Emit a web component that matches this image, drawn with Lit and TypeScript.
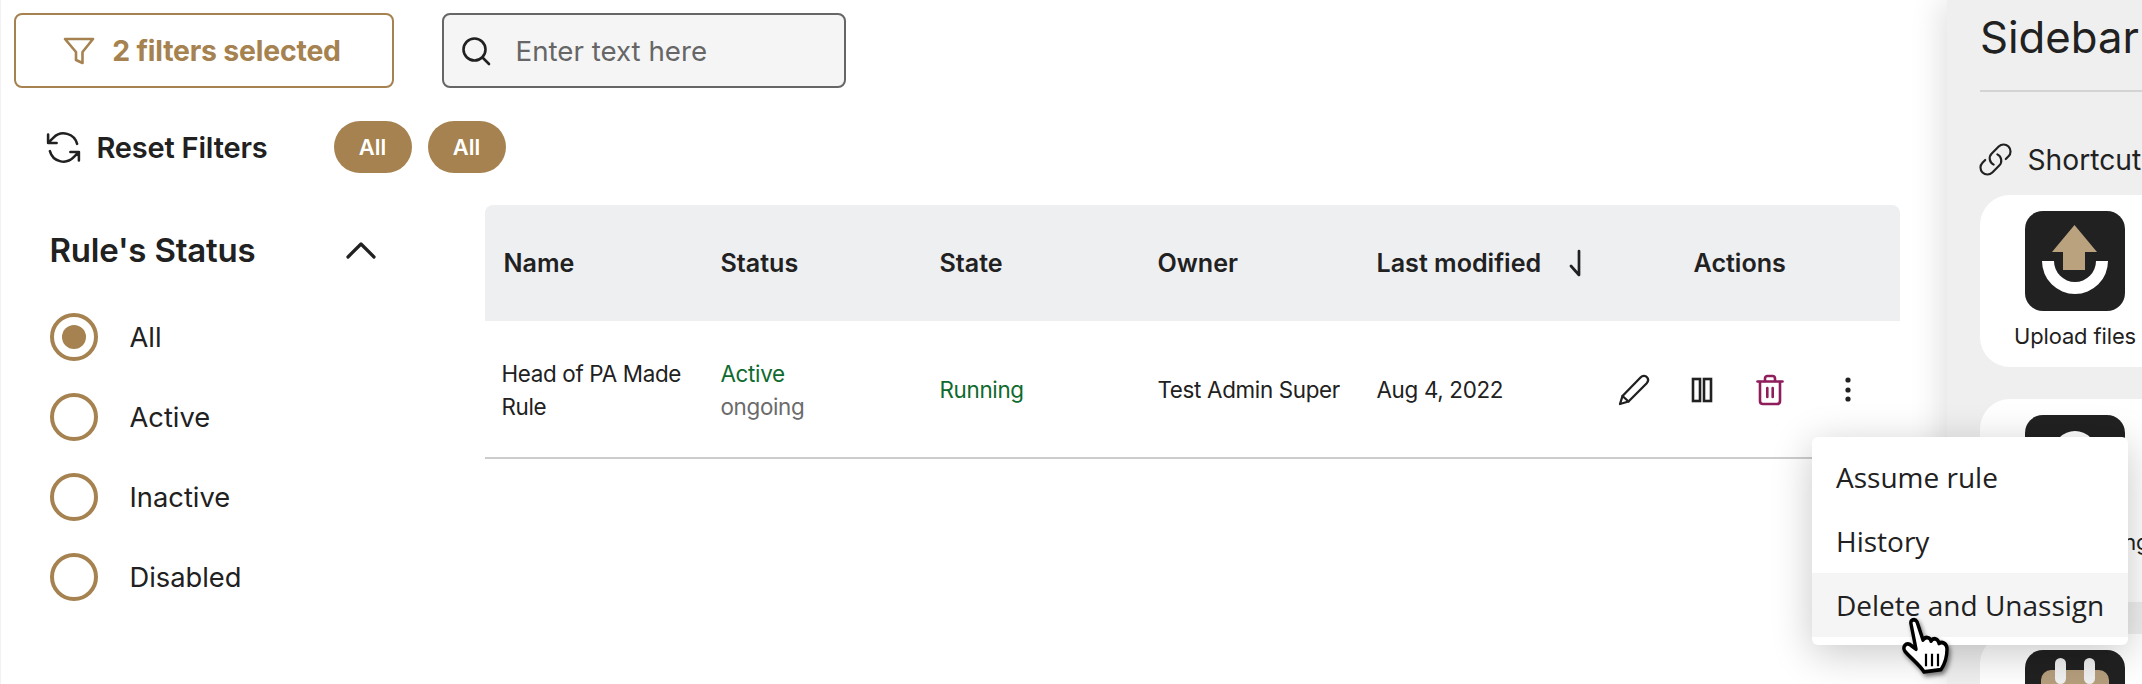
import { LitElement, html, css, svg } from "lit";
import { customElement } from "lit/decorators.js";

const radios = ["All", "Active", "Inactive", "Disabled"];

@customElement("app-root")
export class AppRoot extends LitElement {
  static styles = css`
    :host {
      display: block;
      width: 2142px;
      height: 684px;
      overflow: hidden;
      position: relative;
      background: #fff;
      font-family: Inter, "Liberation Sans", sans-serif;
      color: #212121;
    }
    .page { display: flex; height: 684px; }
    .main { width: 1947px; flex: none; display: flex; flex-direction: column; border-left: 1.5px solid #f2f2f2; box-sizing: border-box; }
    .toolbar { display: flex; gap: 48px; padding: 13px 0 0 12.5px; }
    .filter-btn {
      width: 380px; height: 75px; box-sizing: border-box;
      border: 2px solid #a5824f; border-radius: 8px; background: #fff;
      display: flex; align-items: center; justify-content: center; gap: 17px;
      color: #a5824f; font-size: 28.4px; font-weight: 700; letter-spacing: -0.2px;
      padding-right: 3px;
    }
    .search {
      width: 404px; height: 75px; box-sizing: border-box;
      border: 2px solid #666; border-radius: 8px; background: #f5f5f5;
      display: flex; align-items: center; padding-left: 17px; gap: 25px;
      color: #666; font-size: 27.7px;
    }
    .reset-row { display: flex; align-items: center; margin-top: 33px; height: 52px; padding-left: 42px; }
    .reset { display: flex; align-items: center; gap: 12.5px; font-size: 29px; font-weight: 600; width: 290.5px; letter-spacing: -0.2px; }
    .pills { display: flex; gap: 16px; }
    .pill {
      width: 78px; height: 52px; border-radius: 26px; background: #a5824f; color: #fff;
      display: flex; align-items: center; justify-content: center;
      font-size: 21.9px; font-weight: 600;
    }
    .content { display: flex; margin-top: 32px; }
    .aside { width: 483.5px; flex: none; box-sizing: border-box; padding: 27px 0 0 48.5px; }
    .aside-head { width: 326px; height: 36px; display: flex; align-items: center; justify-content: space-between; font-size: 33px; font-weight: 600; letter-spacing: -0.2px; }
    .radios { margin-top: 29px; }
    .radio-row { height: 80px; display: flex; align-items: center; gap: 32px; font-size: 27.3px; }
    .radio {
      width: 48px; height: 48px; box-sizing: border-box; border-radius: 50%;
      border: 4px solid #a5824f; display: flex; align-items: center; justify-content: center; flex: none;
    }
    .radio.on::after { content: ""; width: 24px; height: 24px; border-radius: 50%; background: #a5824f; }
    .table { width: 1415px; flex: none; }
    .thead, .trow { display: grid; grid-template-columns: 217px 219px 218px 219px 252px 290px; }
    .thead {
      height: 116px; background: #eeeff1; border-radius: 8px 8px 0 0;
      align-items: center; font-size: 25.1px; font-weight: 600; white-space: nowrap;
    }
    .th { padding-left: 19px; }
    .th.sort { display: flex; align-items: center; gap: 27px; }
    .th.act { padding-left: 84px; }
    .trow {
      height: 137.5px; box-sizing: border-box; border-bottom: 2px solid #ccc;
      align-items: center; font-size: 22.4px; letter-spacing: -0.33px; line-height: 33px; padding-top: 2px;
    }
    .td { padding-left: 19px; }
    .td.name { padding-left: 17px; padding-right: 8px; }
    .green { color: #0f6a2e; }
    .gray { color: #6b6b6b; }
    .actions { display: flex; align-items: center; gap: 36px; padding-left: 8px; }
    .actions svg { display: block; flex: none; }
    .actions .dots { margin-left: 10px; }
    .sidebar {
      width: 195px; flex: none; background: #efefef; box-sizing: border-box;
      padding: 11px 0 0 33px; box-shadow: -6px 0 30px rgba(0, 0, 0, 0.12); position: relative;
      overflow: hidden;
    }
    .sidebar-title { font-size: 43.7px; line-height: 54px; color: #212121; }
    .rule { height: 1.5px; background: #d4d4d4; margin-top: 25px; width: 200px; }
    .shortcuts { display: flex; align-items: center; gap: 13.5px; margin-top: 48px; height: 40px; font-size: 28.2px; white-space: nowrap; margin-left: -3px; }
    .shortcuts svg { flex: none; }
    .cards { display: flex; flex-direction: column; gap: 32px; margin-top: 15.5px; }
    .card {
      width: 190px; box-sizing: border-box; background: #fff; border-radius: 30px;
      padding: 16px 0 0; display: flex; flex-direction: column; align-items: center; text-align: center;
      font-size: 21.9px; letter-spacing: -0.1px; line-height: 33px; flex: none;
    }
    .card svg { display: block; }
    .card .label { margin-top: 9px; height: 33px; white-space: nowrap; }
    .card.tall { height: 203px; }
    .card.tall .label { margin-top: 11px; }
    .card.one { height: 172px; }
    .menu {
      position: absolute; left: 1812px; top: 437px; width: 316px; height: 208px; box-sizing: border-box;
      background: #fff; border-radius: 6px; padding: 8px 0;
      box-shadow: 0 8px 40px rgba(0, 0, 0, 0.22);
      font-family: "Open Sans", "Liberation Sans", sans-serif; font-size: 28px; color: #212121;
    }
    .menu-item { height: 64px; display: flex; align-items: center; padding-left: 24px; white-space: nowrap; }
    .menu-item.hover { background: #f5f5f5; }
    .cursor { position: absolute; left: 1900px; top: 610px; filter: drop-shadow(2px 3px 2px rgba(0, 0, 0, 0.5)); }
  `;

  render() {
    return html`
      <div class="page">
        <div class="main">
          <div class="toolbar">
            <div class="filter-btn">
              <svg width="32" height="28" viewBox="0 0 32 28" fill="none" stroke="#a5824f" stroke-width="2.6" stroke-linejoin="round">
                <path d="M2 2H30L19.5 15V26L13 23V15Z" />
              </svg>
              <span>2 filters selected</span>
            </div>
            <div class="search">
              <svg width="30" height="30" viewBox="0 0 30 30" fill="none" stroke="#212121" stroke-width="2.6" stroke-linecap="round">
                <circle cx="13.5" cy="13.5" r="11" /><path d="M21.5 21.5L28 28" />
              </svg>
              <span>Enter text here</span>
            </div>
          </div>
          <div class="reset-row">
            <div class="reset">
              <svg width="41" height="41" viewBox="0 0 24 24" fill="none" stroke="#212121" stroke-width="1.5" stroke-linecap="round" stroke-linejoin="round" style="transform:scaleX(-1)">
                <path d="M16.023 9.348h4.992M2.985 19.644v-4.992m0 0h4.992m-4.993 0 3.181 3.183a8.25 8.25 0 0 0 13.803-3.7M4.031 9.865a8.25 8.25 0 0 1 13.803-3.7l3.181 3.182m0-4.991v4.99" />
              </svg>
              <span>Reset Filters</span>
            </div>
            <div class="pills"><div class="pill">All</div><div class="pill">All</div></div>
          </div>
          <div class="content">
            <div class="aside">
              <div class="aside-head">
                <span>Rule's Status</span>
                <svg width="30" height="18" viewBox="0 0 30 18" fill="none" stroke="#212121" stroke-width="3.2" stroke-linecap="round" stroke-linejoin="round"><path d="M2 16L15 3L28 16" /></svg>
              </div>
              <div class="radios">
                ${radios.map(
                  (r, i) => html`<div class="radio-row"><span class="radio ${i === 0 ? "on" : ""}"></span><span>${r}</span></div>`
                )}
              </div>
            </div>
            <div class="table">
              <div class="thead">
                <div class="th">Name</div>
                <div class="th">Status</div>
                <div class="th">State</div>
                <div class="th">Owner</div>
                <div class="th sort">
                  <span>Last modified</span>
                  <svg width="14" height="28" viewBox="0 0 14 28" fill="none" stroke="#212121" stroke-width="2.7" stroke-linecap="round" stroke-linejoin="round"><path d="M11 2V26L3 17" /></svg>
                </div>
                <div class="th act">Actions</div>
              </div>
              <div class="trow">
                <div class="td name">Head of PA Made Rule</div>
                <div class="td"><div class="green">Active</div><div class="gray">ongoing</div></div>
                <div class="td green">Running</div>
                <div class="td">Test Admin Super</div>
                <div class="td">Aug 4, 2022</div>
                <div class="actions">
                  <svg width="32" height="32" viewBox="0 0 32 32" fill="none" stroke="#212121" stroke-width="2.3" stroke-linejoin="round" stroke-linecap="round">
                    <path d="M2 30L4.5 22L22.5 3.5C24.5 1.5 27.5 1.5 29 3.3C30.5 5 30.3 7.5 28.5 9.5L10.5 27.5Z" /><path d="M4.5 22L10.5 27.5" />
                  </svg>
                  <svg width="32" height="32" viewBox="0 0 32 32" fill="none" stroke="#212121" stroke-width="2.6">
                    <rect x="7" y="5" width="7" height="22" /><rect x="18" y="5" width="7" height="22" />
                  </svg>
                  <svg width="32" height="32" viewBox="0 0 32 32" fill="none" stroke="#8f1d5c" stroke-width="2.6" stroke-linejoin="round" stroke-linecap="round">
                    <path d="M3.5 7.5H28.5" /><path d="M11 7V4.5C11 3 12 2 13.5 2H18.5C20 2 21 3 21 4.5V7" /><path d="M6 8V27C6 29 7 30 9 30H23C25 30 26 29 26 27V8" /><path d="M13.3 14V23M18.7 14V23" />
                  </svg>
                  <svg class="dots" width="32" height="32" viewBox="0 0 32 32" fill="#212121">
                    <circle cx="16" cy="6" r="2.6" /><circle cx="16" cy="16" r="2.6" /><circle cx="16" cy="25" r="2.6" />
                  </svg>
                </div>
              </div>
            </div>
          </div>
        </div>
        <div class="sidebar">
          <div class="sidebar-title">Sidebar</div>
          <div class="rule"></div>
          <div class="shortcuts">
            <svg width="37" height="37" viewBox="0 0 24 24" fill="none" stroke="#212121" stroke-width="1.4" stroke-linecap="round" stroke-linejoin="round">
              <path d="M13.19 8.688a4.5 4.5 0 0 1 1.242 7.244l-4.5 4.5a4.5 4.5 0 0 1-6.364-6.364l1.757-1.757m13.35-.622 1.757-1.757a4.5 4.5 0 0 0-6.364-6.364l-4.5 4.5a4.5 4.5 0 0 0 1.242 7.244" />
            </svg>
            <span>Shortcuts</span>
          </div>
          <div class="cards">
            <div class="card one">
              <svg width="100" height="100" viewBox="0 0 100 100">
                <rect width="100" height="100" rx="18" fill="#212121" />
                ${svg`<path d="M17 50H83A33 33 0 0 1 17 50Z M29 50A21 21 0 0 0 71 50Z" fill="#fff" fill-rule="evenodd" />
                <path d="M49.5 14L72 41H60V59H38V41H27Z" fill="#bba27f" />`}
              </svg>
              <div class="label">Upload files</div>
            </div>
            <div class="card tall">
              <svg width="100" height="100" viewBox="0 0 100 100">
                <rect width="100" height="100" rx="18" fill="#212121" />
                <circle cx="50" cy="38" r="22" fill="#fff" />
                <path d="M18 84C22 66 36 60 50 60C64 60 78 66 82 84Z" fill="#bba27f" />
              </svg>
              <div class="label">Add a meeting</div>
            </div>
            <div class="card">
              <svg width="100" height="100" viewBox="0 0 100 100">
                <rect width="100" height="100" rx="18" fill="#212121" />
                <rect x="16" y="20" width="68" height="64" rx="10" fill="#b59e7c" />
                <rect x="30" y="8" width="11" height="26" rx="5.5" fill="#f0f0f0" />
                <rect x="59" y="8" width="11" height="26" rx="5.5" fill="#f0f0f0" />
              </svg>
            </div>
          </div>
        </div>
      </div>
      <div class="menu">
        <div class="menu-item">Assume rule</div>
        <div class="menu-item">History</div>
        <div class="menu-item hover">Delete and Unassign</div>
      </div>
      <svg class="cursor" width="54" height="72" viewBox="0 0 54 72">
        <g transform="translate(0 1.5) scale(1 1.14)">
          <path d="M11 11C10 7 15 6 17 9L23 25C25 22 30 22 31 26C33 23 38 23 39 28C42 26 47 28 47 33C47 40 45 46 41 51L24 53C20 47 12 42 5 35C2 31 6 27 10 29L16 33Z" fill="#fff" stroke="#000" stroke-width="3.4" stroke-linejoin="round" />
          <path d="M26 37V48M32 37V48M38 37V48" stroke="#000" stroke-width="2.2" fill="none" />
        </g>
      </svg>
    `;
  }
}
